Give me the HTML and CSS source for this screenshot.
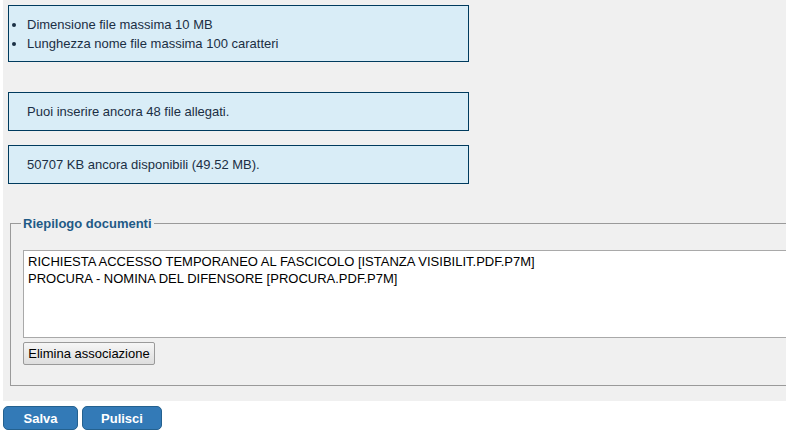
FILE: index.html
```html
<!DOCTYPE html>
<html lang="it">
<head>
<meta charset="utf-8">
<title>Allegati</title>
<link rel="stylesheet" href="styles.css">
</head>
<body>
<div class="panel">
  <div class="info info-list">
    <ul>
      <li>Dimensione file massima 10 MB</li>
      <li>Lunghezza nome file massima 100 caratteri</li>
    </ul>
  </div>
  <div class="info info-first">Puoi inserire ancora 48 file allegati.</div>
  <div class="info">50707 KB ancora disponibili (49.52 MB).</div>
  <fieldset class="summary">
    <legend>Riepilogo documenti</legend>
    <div class="listbox">
      <div class="option">RICHIESTA ACCESSO TEMPORANEO AL FASCICOLO [ISTANZA VISIBILIT.PDF.P7M]</div>
      <div class="option">PROCURA - NOMINA DEL DIFENSORE [PROCURA.PDF.P7M]</div>
    </div>
    <button class="btn-plain" type="button">Elimina associazione</button>
  </fieldset>
</div>
<div class="actions">
  <button class="btn-blue btn-save" type="button">Salva</button>
  <button class="btn-blue btn-clear" type="button">Pulisci</button>
</div>
</body>
</html>
```

FILE: styles.css
```css
html, body {
  margin: 0;
  padding: 0;
  background: #ffffff;
  font-family: "Liberation Sans", Arial, sans-serif;
  font-size: 12px;
  overflow: hidden;
}

.panel {
  margin-left: 3px;
  background: #f0f0f0;
  padding: 5px 0 15px 0;
  overflow: hidden;
}

.info {
  box-sizing: border-box;
  width: 461px;
  height: 39px;
  margin-left: 5px;
  background: #d9edf7;
  border: 1px solid #003b5e;
  color: #1b2f44;
  font-size: 13px;
  line-height: 17px;
  padding: 10px 18px 10px 18px;
  margin-bottom: 14px;
}

.info-list {
  height: 57px;
  padding: 9px 0 0 0;
  margin-bottom: 30px;
}

.info-list ul {
  margin: 0;
  padding-left: 18px;
  line-height: 19px;
}

.summary {
  width: 900px;
  margin: 32px 0 0 7px;
  padding: 0 12px 20px 12px;
  border: 1px solid #9a9a9a;
  border-right: none;
}

.summary legend {
  color: #1f5a86;
  font-weight: bold;
  font-size: 13px;
  padding: 0 2px;
  margin-left: -2px;
}

.listbox {
  margin-top: 19px;
  height: 82px;
  background: #ffffff;
  border: 1px solid #a9a9a9;
  border-right: none;
  padding: 2px 4px;
  color: #000000;
  font-size: 13px;
  line-height: 17px;
}

.btn-plain {
  margin-top: 4px;
  width: 132px;
  height: 23px;
  padding: 0;
  font-family: "Liberation Sans", Arial, sans-serif;
  font-size: 13px;
  color: #000;
  background: linear-gradient(#f6f6f6, #dedede);
  border: 1px solid #9a9a9a;
  border-radius: 2px;
}

.actions {
  display: flex;
  gap: 4px;
  margin: 5px 0 0 3px;
}

.btn-blue {
  height: 24px;
  font-family: "Liberation Sans", Arial, sans-serif;
  font-size: 13px;
  font-weight: bold;
  color: #ffffff;
  background: #337ab7;
  border: 1px solid #24618f;
  border-radius: 5px;
  padding: 0;
}

.btn-save { width: 75px; }
.btn-clear { width: 80px; }
```
